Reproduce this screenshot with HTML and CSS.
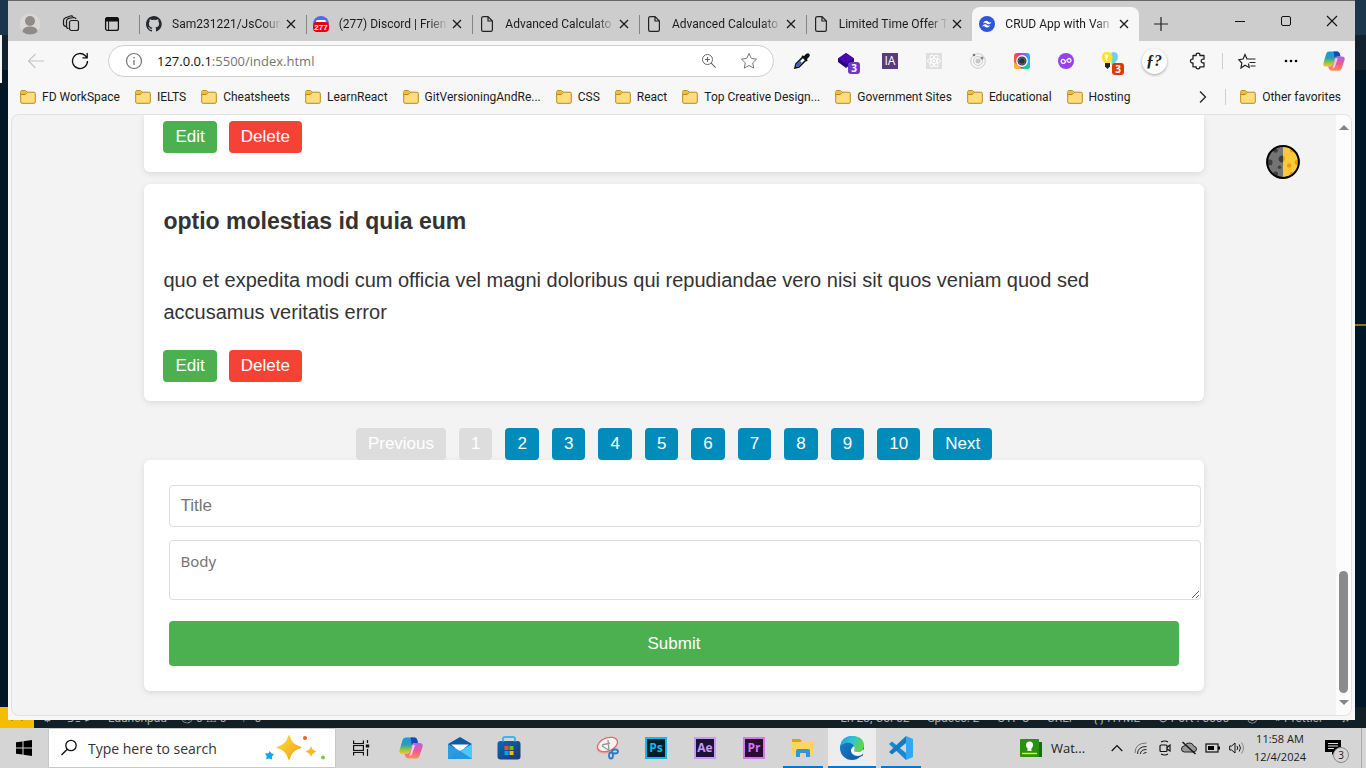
FILE: index.html
```html
<!DOCTYPE html>
<html lang="en">
<head>
<meta charset="utf-8">
<title>CRUD App with Vanilla JS</title>
<link rel="stylesheet" href="styles.css">
</head>
<body>
<svg class="sprite" aria-hidden="true">
  <defs>
    <linearGradient id="g-cop1" x1="0" y1="0" x2="0" y2="1"><stop offset="0" stop-color="#159bea"/><stop offset=".45" stop-color="#2d9fae"/><stop offset=".75" stop-color="#9cc63a"/><stop offset="1" stop-color="#f6c62b"/></linearGradient>
    <linearGradient id="g-cop2" x1="0" y1="0" x2="0" y2="1"><stop offset="0" stop-color="#b264e4"/><stop offset=".5" stop-color="#ee5796"/><stop offset="1" stop-color="#fb9258"/></linearGradient>
    <linearGradient id="g-edge" x1="0" y1="0" x2="1" y2=".4"><stop offset="0" stop-color="#1e9de0"/><stop offset=".5" stop-color="#2cc3d8"/><stop offset="1" stop-color="#5fd746"/></linearGradient>
    <linearGradient id="g-edge2" x1="0" y1="0" x2="1" y2="1"><stop offset="0" stop-color="#1783cf"/><stop offset="1" stop-color="#12539f"/></linearGradient>
    <linearGradient id="g-store" x1="0" y1="0" x2="1" y2="1"><stop offset="0" stop-color="#0b68bd"/><stop offset="1" stop-color="#1f3767"/></linearGradient>
    <linearGradient id="g-cam" x1="0" y1="0" x2="1" y2="0"><stop offset="0" stop-color="#ff5a3c"/><stop offset=".3" stop-color="#f02c92"/><stop offset=".6" stop-color="#8a5cf0"/><stop offset="1" stop-color="#16c0e8"/></linearGradient>
    <linearGradient id="g-star" x1="0" y1="0" x2="1" y2="1"><stop offset="0" stop-color="#ffdb3d"/><stop offset="1" stop-color="#f3a115"/></linearGradient>
  </defs>
  <symbol id="close" viewBox="0 0 12 12"><path d="M2 2l8 8M10 2l-8 8" fill="none" stroke="#1a1a1a" stroke-width="1.3"/></symbol>
  <symbol id="page" viewBox="0 0 16 16"><path d="M4.500 .6H9L13.400 5v8.800q0 1.600-1.600 1.600H4.200q-1.600 0-1.600-1.600V2.200Q2.600.6 4.500.6zM9 .8V5h4.300" fill="none" stroke="#222" stroke-width="1.200"/></symbol>
  <symbol id="folder" viewBox="0 0 16 14"><path d="M.7 2.700V1.800Q.7.6 1.900.6h3.600l1.600 1.600h6.800q1.400 0 1.400 1.400v8.300q0 1.400-1.400 1.400H2.100Q.7 13.300.7 11.900z" fill="#ffdc7c" stroke="#b78a13"/><path d="M1.200 1.200h4.200l1.300 1.300-1.500 1.700h-4z" fill="#f2b92e"/><path d="M.8 4.500h4.400l1.900-2" fill="none" stroke="#b78a13"/></symbol>
  <symbol id="copilot" viewBox="0 0 24 24"><path d="M6.500 1.500h9q2 0 2.800 2.400L19 7h-3.400q-2 0-2.700 2.200L11 15.500Q10.200 18 7.600 18H3.300Q-.4 18 .6 14L3.500 4q.8-2.500 3-2.500z" fill="url(#g-cop1)"/><path d="M11.500 1.500h4q2 0 2.800 2.400L19 7h-3.400q-2 0-2.700 2.200Z" fill="#1b48b6"/><path d="M17.500 22.500H9.300q-2.300 0-3-2.300L5.600 18h2q2.600 0 3.400-2.500l2-6.300Q13.700 7 16.200 7h4.500q3.700 0 2.800 4l-3 9q-.8 2.500-3 2.500z" fill="url(#g-cop2)"/><path d="M13.800 8.500l2.300.8-3 9q-.8 2-2.900 2z" fill="#fff" opacity=".65"/></symbol>
</svg>

<main class="desktop">
  <div class="backdrop" aria-hidden="true"><span class="sliver"></span><span class="marker"></span></div>
  <footer class="status">
    <span class="remote">&gt;&lt;</span>
    <div class="status-group left"><span>⚙</span><span>⎇ ⊳</span><span>Launchpad</span><span>ⓧ 0 ⚠ 0</span><span>⚐ 0</span></div>
    <div class="status-group right"><span>Ln 23, Col 52</span><span>Spaces: 2</span><span>UTF-8</span><span>CRLF</span><span>{ } HTML</span><span>⊘ Port : 5500</span><span>◎</span><span>» Prettier</span><span>♫</span></div>
  </footer>

  <section class="window">
    <header class="tabstrip">
      <div class="strip-tools">
        <button aria-label="Profile"><svg width="22" height="22" viewBox="0 0 22 22"><circle cx="11" cy="11" r="10.500" fill="#dad8d5"/><circle cx="11" cy="8" r="5" fill="#8f8b88"/><path d="M3.500 19q0-5.500 7.500-5.500t7.500 5.500Q11 24 3.500 19z" fill="#8f8b88"/></svg></button>
        <button aria-label="Workspaces"><svg width="18" height="18" viewBox="0 0 18 18" fill="none" stroke="#1c1c1c" stroke-width="1.200"><rect x="7.500" y="5.500" width="9" height="10" rx="2"/><path d="M6.500 13.500Q4.500 13.500 4.500 11.500V6q0-2 2-2.600L12 2.500q1.500 0 2 1.500M4 11.500Q1.500 11 1.500 9V5.500q0-2 2-2.800L9 .8q1.600 0 2 .9"/></svg></button>
        <button aria-label="Tab actions"><svg width="16" height="16" viewBox="0 0 16 16"><rect x="1.600" y="1.600" width="12.800" height="12.800" rx="2" fill="none" stroke="#111" stroke-width="1.300"/><path d="M1.500 3.500q0-2 2-2h9q2 0 2 2V5h-13z" stroke="#111" fill="#111"/><path d="M4.600 5v9" stroke="#111"/></svg></button>
      </div>
      <nav class="tabs">
        <div class="tab"><svg class="fav" viewBox="0 0 16 16"><path d="M8 0C3.600 0 0 3.600 0 8c0 3.500 2.300 6.500 5.500 7.600.4.100.5-.2.500-.4v-1.400c-2.200.5-2.700-1-2.700-1-.4-.9-.9-1.200-.9-1.200-.7-.5.100-.5.100-.5.800.1 1.200.8 1.200.8.7 1.200 1.900.9 2.300.7.100-.5.300-.9.500-1.100-1.800-.2-3.600-.9-3.600-4 0-.9.300-1.600.8-2.100-.1-.2-.4-1 .1-2.100 0 0 .7-.2 2.200.8a7.500 7.500 0 0 1 4 0c1.500-1 2.200-.8 2.200-.8.400 1.100.2 1.900.1 2.100.5.600.8 1.300.8 2.100 0 3.100-1.900 3.700-3.700 3.900.3.300.6.800.6 1.500v2.200c0 .2.100.5.500.4A8 8 0 0 0 8 0z" fill="#24292f"/></svg><span class="title">Sam231221/JsCours</span><button aria-label="Close tab"><svg width="12" height="12"><use href="#close"/></svg></button></div>
        <div class="tab"><svg class="fav" viewBox="0 0 16 16"><path d="M0 8a8 8 0 0 1 16 0z" fill="#5865f2"/><rect x="3" y="4" width="10" height="3" rx="1.500" fill="#fff"/><rect y="6" width="16" height="10" rx="4" fill="#e3000f"/><text x="8" y="14" class="fav-count">277</text></svg><span class="title">(277) Discord | Frien</span><button aria-label="Close tab"><svg width="12" height="12"><use href="#close"/></svg></button></div>
        <div class="tab"><svg class="fav"><use href="#page"/></svg><span class="title">Advanced Calculato</span><button aria-label="Close tab"><svg width="12" height="12"><use href="#close"/></svg></button></div>
        <div class="tab"><svg class="fav"><use href="#page"/></svg><span class="title">Advanced Calculato</span><button aria-label="Close tab"><svg width="12" height="12"><use href="#close"/></svg></button></div>
        <div class="tab"><svg class="fav"><use href="#page"/></svg><span class="title">Limited Time Offer T</span><button aria-label="Close tab"><svg width="12" height="12"><use href="#close"/></svg></button></div>
        <div class="tab active"><svg class="fav" viewBox="0 0 16 16"><circle cx="8" cy="8" r="8" fill="#2f55d8"/><path d="M4 7.500Q5 4.500 7.500 4.700 8.600 4.800 9.600 5.900 11 7 12.600 5.700 11.500 8.600 9 8.300 8 8.100 7 7.100 5.700 6 4 7.500zM3 10.700Q4 7.900 6.300 8.200 7.300 8.300 8.300 9.300 9.800 10.300 11.200 9 10.200 11.800 7.700 11.500 6.700 11.300 5.800 10.400 4.500 9.500 3 10.700z" fill="#fff"/></svg><span class="title">CRUD App with Van</span><button aria-label="Close tab"><svg width="12" height="12"><use href="#close"/></svg></button></div>
      </nav>
      <button class="newtab" aria-label="New tab"><svg width="14" height="14"><path d="M7 0v14M0 7h14" stroke="#222" stroke-width="1.200"/></svg></button>
      <div class="win-controls">
        <button aria-label="Minimize"><svg width="12" height="12"><path d="M1 6.500h10" stroke="#111"/></svg></button>
        <button aria-label="Restore"><svg width="12" height="12"><rect x="1.500" y="1.500" width="9" height="9" rx="1.500" fill="none" stroke="#111"/></svg></button>
        <button aria-label="Close"><svg width="12" height="12" viewBox="0 0 12 12"><path d="M1 1l10 10M11 1L1 11" stroke="#111" stroke-width="1.100"/></svg></button>
      </div>
    </header>

    <div class="toolbar">
      <button aria-label="Back"><svg width="18" height="16"><path d="M17 8H2M8.500 1L1.500 8l7 7" fill="none" stroke="#c6c6c6" stroke-width="1.200"/></svg></button>
      <button aria-label="Refresh"><svg width="18" height="18"><path d="M16.500 9A7.500 7.500 0 1 1 14.300 3.700L16 5.500M16.200 1v4.800h-4.800" fill="none" stroke="#111" stroke-width="1.300"/></svg></button>
      <div class="address">
        <svg width="18" height="18"><circle cx="9" cy="9" r="7.500" fill="none" stroke="#757575" stroke-width="1.200"/><path d="M9 8v5M9 5v1.600" stroke="#757575" stroke-width="1.300"/></svg>
        <a class="url" href="#"><b>127.0.0.1</b>:5500/index.html</a>
        <button aria-label="Zoom"><svg width="16" height="16"><circle cx="6.500" cy="6.500" r="5" fill="none" stroke="#666"/><path d="M10.200 10.200l4.500 4.500M6.500 4v5M4 6.500h5" stroke="#666" stroke-width="1.100"/></svg></button>
        <button aria-label="Add to favorites"><svg width="18" height="18" viewBox="0 0 18 18"><path d="M9 1.500l2.300 4.900 5.300.7-3.900 3.700 1 5.300L9 13.500l-4.700 2.600 1-5.300L1.400 7.100l5.300-.7z" fill="none" stroke="#777" stroke-linejoin="round"/></svg></button>
      </div>
      <button aria-label="Color picker"><svg width="16" height="16"><path d="M1 15l1-4 7-7 3 3-7 7z" fill="#fff" stroke="#111" stroke-width="1.600"/><path d="M2 14l1-3 3-3 2 2-4 4z" fill="#3261d8"/><path d="M7.500 3.500l5 5 1.300-1.300-1-1L15 4q1.500-1.500.3-3t-3.300 0L9.800 3.200l-1-1z" fill="#111"/></svg></button>
      <button class="badged" aria-label="Layers"><svg width="16" height="16"><path d="M8 0l8 5.500v3L8 15 0 9V5.500z" fill="#27077c"/><path d="M8 0l8 5.500L8 11 0 5.500z" fill="#4a08b2"/></svg><span class="badge purple">3</span></button>
      <button aria-label="Internet Archive"><span class="ia">IA</span></button>
      <button aria-label="React tools"><svg width="16" height="16"><rect width="16" height="16" fill="#dedede"/><g fill="none" stroke="#fff"><ellipse cx="8" cy="8" rx="6.500" ry="2.500"/><ellipse cx="8" cy="8" rx="6.500" ry="2.500" transform="rotate(60 8 8)"/><ellipse cx="8" cy="8" rx="6.500" ry="2.500" transform="rotate(120 8 8)"/></g><circle cx="8" cy="8" r="1.300" fill="#fff"/></svg></button>
      <button aria-label="Orbit"><svg width="16" height="16"><circle cx="8" cy="8" r="7.300" fill="none" stroke="#ccc"/><circle cx="8" cy="8" r="4.500" fill="none" stroke="#ccc"/><circle cx="8" cy="8" r="2.500" fill="#c6c6c6"/><circle cx="4" cy="2" r="1.300" fill="#777"/><circle cx="12" cy="5" r="1.500" fill="#888"/></svg></button>
      <button aria-label="Capture"><svg width="16" height="16"><rect width="16" height="16" rx="3" fill="url(#g-cam)"/><path d="M8 16l8-7v4q0 3-3 3z" fill="#23c98f"/><path d="M0 9l8 7H3q-3 0-3-3z" fill="#ffb52e"/><circle cx="8" cy="8" r="5.200" fill="#26323c" stroke="#fff" stroke-width="1.400"/><circle cx="8" cy="8" r="3.300" fill="none" stroke="#7a8994" stroke-width=".7"/></svg></button>
      <button aria-label="Link tool"><svg width="16" height="16"><circle cx="8" cy="8" r="8" fill="#983ff0"/><path d="M8 8.500L6.500 10Q5 11 3.700 9.700T3.700 7q1.300-1.300 2.600 0l1.400 1.600M8.300 7.500L10 6q1.400-1 2.500.2t0 2.600q-1.300 1.300-2.700-.2l-.8-.8" fill="none" stroke="#fff" stroke-width="1.300"/></svg></button>
      <button class="badged" aria-label="Ideas"><svg width="18" height="18"><path d="M12 0q5 0 5 5 0 2.500-2.500 5v3h-4V9q-2-1-2-4t3.500-5z" fill="#78cbed"/><path d="M6 0q5.500 0 5.500 5.500 0 2.500-2.500 6H4Q.8 8 .8 5.500.8 0 6 0z" fill="#ffe12e"/><path d="M3.500 3.500q1-2 4 0L5.500 9z" fill="#fffbd0"/><path d="M4 11h5v3.500l-2.500 2.500L4 14.500z" fill="#222"/></svg><span class="badge red">3</span></button>
      <button aria-label="Font finder"><span class="fq">ƒ?</span></button>
      <button aria-label="Extensions"><svg width="18" height="18"><path d="M4 3.500h3.200q-.5-2.300 1.800-2.300t1.800 2.300H15V7.200q-2.800-.3-2.800 1.800T15 11v3.800h-4.200q.4 2-1.800 2t-1.800-2H4V11Q1.500 11.200 1.500 9T4 7.200z" fill="none" stroke="#222" stroke-width="1.300" stroke-linejoin="round"/></svg></button>
      <span class="divider"></span>
      <button aria-label="Favorites"><svg width="18" height="16"><path d="M10.500 10.500l.7 4L7 12.300 3 15l.8-5L.8 6.700l4.300-.7L7 1.500 9 6h8.500M11.500 9.500h6M12.500 13h5" fill="none" stroke="#222" stroke-width="1.200"/></svg></button>
      <button aria-label="Settings and more"><svg width="16" height="4"><circle cx="3" cy="2" r="1.300"/><circle cx="8" cy="2" r="1.300"/><circle cx="13" cy="2" r="1.300"/></svg></button>
      <button aria-label="Copilot"><svg width="22" height="22"><use href="#copilot"/></svg></button>
    </div>

    <nav class="bookmarks">
      <a href="#"><svg><use href="#folder"/></svg>FD WorkSpace</a>
      <a href="#"><svg><use href="#folder"/></svg>IELTS</a>
      <a href="#"><svg><use href="#folder"/></svg>Cheatsheets</a>
      <a href="#"><svg><use href="#folder"/></svg>LearnReact</a>
      <a href="#"><svg><use href="#folder"/></svg>GitVersioningAndRe...</a>
      <a href="#"><svg><use href="#folder"/></svg>CSS</a>
      <a href="#"><svg><use href="#folder"/></svg>React</a>
      <a href="#"><svg><use href="#folder"/></svg>Top Creative Design...</a>
      <a href="#"><svg><use href="#folder"/></svg>Government Sites</a>
      <a href="#"><svg><use href="#folder"/></svg>Educational</a>
      <a href="#"><svg><use href="#folder"/></svg>Hosting</a>
      <button class="more" aria-label="More bookmarks"><svg width="8" height="12" viewBox="0 0 8 12"><path d="M1 .5L6.500 6 1 11.500" fill="none" stroke="#222" stroke-width="1.300"/></svg></button>
      <span class="divider"></span>
      <a href="#"><svg><use href="#folder"/></svg>Other favorites</a>
    </nav>

    <div class="viewport">
      <div class="page">
        <article class="card clipped">
          <div class="actions"><button class="btn edit">Edit</button><button class="btn delete">Delete</button></div>
        </article>
        <article class="card">
          <h3>optio molestias id quia eum</h3>
          <p>quo et expedita modi cum officia vel magni doloribus qui repudiandae vero nisi sit quos veniam quod sed accusamus veritatis error</p>
          <div class="actions"><button class="btn edit">Edit</button><button class="btn delete">Delete</button></div>
        </article>
        <nav class="pagination">
          <button class="btn" disabled>Previous</button><button class="btn" disabled>1</button><button class="btn">2</button><button class="btn">3</button><button class="btn">4</button><button class="btn">5</button><button class="btn">6</button><button class="btn">7</button><button class="btn">8</button><button class="btn">9</button><button class="btn">10</button><button class="btn">Next</button>
        </nav>
        <form class="post-form">
          <input type="text" placeholder="Title" aria-label="Title">
          <textarea placeholder="Body" aria-label="Body"></textarea>
          <button type="submit">Submit</button>
        </form>
        <button class="theme" aria-label="Toggle theme"><svg width="34" height="34"><circle cx="17" cy="17" r="16" fill="#ffc83d"/><path d="M17 1a16 16 0 0 0 0 32z" fill="#747474"/><g fill="#3d3d3d"><path d="M17 10.500V17.500A3.600 3.600 0 1 1 17 10.500z"/><circle cx="13.500" cy="22.300" r="1.700"/><circle cx="3.500" cy="17.500" r="3"/><circle cx="9.500" cy="29" r="2.500"/><circle cx="9.500" cy="5.500" r="2.300"/></g><g fill="#f19a0a"><path d="M17 10.800a3.300 3.300 0 0 1 0 6z"/><circle cx="23.200" cy="20.500" r="2.200"/><circle cx="31" cy="17.500" r="2.400"/><circle cx="26" cy="5.500" r="2"/><circle cx="25.500" cy="29" r="2"/></g><circle cx="17" cy="17" r="15.900" fill="none" stroke="#000" stroke-width="2"/></svg></button>
      </div>
      <div class="scrollbar" aria-hidden="true">
        <svg width="10" height="5"><path d="M0 5L5 0l5 5z" fill="#858585"/></svg>
        <span class="track"><span class="thumb"></span></span>
        <svg width="10" height="5"><path d="M0 0h10L5 5z" fill="#858585"/></svg>
      </div>
    </div>
  </section>
</main>

<footer class="taskbar">
  <button class="start" aria-label="Start"><svg width="16" height="16"><path d="M0 2.300L6.500 1.400V7.500H0zM7.500 1.200L16 0v7.500H7.500zM0 8.500h6.500v6.100L0 13.700zM7.500 8.500H16V16l-8.500-1.200z"/></svg></button>
  <label class="search">
    <svg width="16" height="18"><circle cx="10" cy="6.500" r="5.200" fill="none" stroke="#111" stroke-width="1.300"/><path d="M6.300 10.200L.5 16" stroke="#111" stroke-width="1.400"/></svg>
    <input type="text" placeholder="Type here to search" aria-label="Type here to search">
    <svg width="62" height="26"><path d="M24 1q2 9 11.500 11.500Q26 15 24 24q-2-9-11.500-11.500Q22 10 24 1z" fill="url(#g-star)" stroke="url(#g-star)" stroke-width="1.500" stroke-linejoin="round"/><path d="M46 11q1 4 5.500 5.500Q47 18 46 22q-1-4-5.500-5.500Q45 15 46 11z" fill="#f8b92b"/><path d="M4.500 16l2 2.500 2.500.5-2 2.500v3l-3-1-3 1 .8-3L0 18.500l3.500-.3z" fill="#14a5ed"/><circle cx="40" cy="3" r="2" fill="#f05c2c"/><circle cx="58" cy="22.500" r="2" fill="#85c83d"/></svg>
  </label>
  <button class="taskview" aria-label="Task view"><svg width="18" height="16" fill="none" stroke="#111" stroke-width="1.200"><path d="M1.600.5v3h9.800v-3M1.600 15.500v-3h9.800v3M15.500 0v3M15.500 9v7"/><rect x="1.600" y="5.500" width="9.800" height="5"/><path d="M13.800 4.500h3.400v3h-3.400z" fill="#111" stroke="none"/></svg></button>
  <div class="apps">
    <button aria-label="Copilot"><svg width="24" height="24"><use href="#copilot"/></svg></button>
    <button aria-label="Mail"><svg width="24" height="24"><path d="M0 8L12 1l12 7v4H0z" fill="#0b5ba7"/><path d="M3 8.500h18l-9 7z" fill="#fff"/><path d="M0 8v15h24V8L12 15z" fill="#2b9be5"/><path d="M24 8v15L12 15z" fill="#45cbfb"/><path d="M0 23h24L12 15z" fill="#2496e2"/></svg></button>
    <button aria-label="Store"><svg width="24" height="24"><path d="M6 7V3q0-2 2-2h8q2 0 2 2v4" fill="none" stroke="#38b9ed" stroke-width="2"/><rect x=".5" y="5" width="23" height="18.500" rx="3" fill="url(#g-store)"/><path d="M6 5.500V3M18 5.500V3" stroke="#38b9ed" stroke-width="2"/><path d="M7.500 10h4v4h-4z" fill="#f25022"/><path d="M12.500 10h4v4h-4z" fill="#7fba00"/><path d="M7.500 15h4v4h-4z" fill="#00a4ef"/><path d="M12.500 15h4v4h-4z" fill="#ffb900"/></svg></button>
    <span class="spacer"></span>
    <button aria-label="Snipping Tool"><svg width="24" height="24"><ellipse cx="12" cy="10" rx="11" ry="7" transform="rotate(-22 12 10)" fill="#e8aaaa"/><ellipse cx="12.500" cy="8.500" rx="10.500" ry="6.500" transform="rotate(-22 12.500 8.500)" fill="#f8f5f5" stroke="#e46b6b" stroke-width="1.300"/><path d="M13 4l1 11M7 10l8 5M15 7l-8 2" stroke="#999" stroke-width="1.400"/><g fill="none" stroke="#2f7bbf" stroke-width="1.800"><ellipse cx="16" cy="19.500" rx="2" ry="3"/><ellipse cx="20" cy="15.500" rx="3" ry="2"/></g></svg></button>
    <button aria-label="Photoshop"><span class="adobe ps">Ps</span></button>
    <button aria-label="After Effects"><span class="adobe ae">Ae</span></button>
    <button aria-label="Premiere"><span class="adobe pr">Pr</span></button>
    <button class="running" aria-label="File Explorer"><svg width="22" height="20"><path d="M0 1h8l2 2h12v15H0z" fill="#ffd461"/><path d="M0 1h8l2 2-2 1H0z" fill="#dda016"/><path d="M4 19v-6q0-2 2-2h10q2 0 2 2v6h-4v-4H8v4z" fill="#3593dd"/></svg></button>
    <button class="current" aria-label="Edge"><svg width="24" height="24"><circle cx="12" cy="12" r="12" fill="url(#g-edge2)"/><path d="M.1 11Q1.500 0 12 0q11.800.4 12 9.500 0 6-6.500 6.500-3.800 0-3.200-2 1.700-2-.3-4Q11.500 6 6.500 6.800 1.500 8 .1 11z" fill="url(#g-edge)"/><path d="M14 10q-4-1-5.200 3Q8.500 20 17 20q4 .2 6-2.300.5 1-.6 2.300-.8 0-3 1-11 1-10.600-7Q10 9 14 10z" fill="#0d68b4"/><path d="M14 10q1.800 2.200.3 4-.5 2 3.200 2 4 0 5.500-2.500l1 .5q0 3-2.500 5Q15 21.500 12 17.500T14 10z" fill="#f5f6f7"/></svg></button>
    <button class="running" aria-label="Visual Studio Code"><svg width="24" height="24"><path d="M17 0l7 3v18l-7 3z" fill="#31a8f1"/><path d="M17 24v-7L3 5.500 0 8z" fill="#1689d4"/><path d="M17 0v7L3 18.500 0 16z" fill="#137ac4"/></svg></button>
  </div>
  <div class="tray">
    <button class="widget"><svg width="22" height="18"><path d="M4 3h18v15H4z" fill="#107010"/><rect width="19" height="18" rx="1" fill="#26920f"/><circle cx="9.500" cy="6" r="3.500" fill="#fff"/><path d="M7.500 8h4v4h-4z" fill="#fff"/><path d="M2 14.500h15" stroke="#e7f000" stroke-width="1.500"/></svg>Wat...</button>
    <button aria-label="Show hidden icons"><svg width="12" height="8"><path d="M.7 7L6 1.500 11.300 7" fill="none" stroke="#111" stroke-width="1.200"/></svg></button>
    <button aria-label="Network"><svg width="14" height="14" fill="none" stroke="#222"><path d="M1 12Q1 2 12.500 2" stroke="#777"/><path d="M3.500 13q0-7.500 9-7.500M6.500 13q0-4.500 6-4.500M9.500 13q0-1.500 3-1.500"/></svg></button>
    <button aria-label="Meet now"><svg width="12" height="16" fill="none" stroke="#111" stroke-width="1.200"><rect x="1" y="5" width="7" height="6.500" rx="1"/><path d="M8 7.500L11 5v6L8 9M2 2q4-2 7 0M2 14q4 2 7 0"/></svg></button>
    <button aria-label="OneDrive"><svg width="16" height="14"><path d="M3.500 11q-3 0-3-3t3-3Q5 1.500 9 2q3 .4 3.500 3 3 .4 3 3t-3 3z" fill="#999" stroke="#222"/><path d="M1.500 1l13 12" stroke="#111" stroke-width="1.400"/></svg></button>
    <button aria-label="Battery"><svg width="16" height="10"><rect x="1" y="1" width="12" height="8" fill="none" stroke="#111" stroke-width="1.200"/><path d="M3 3h6v4H3zM13 3.500h2v3h-2z"/></svg></button>
    <button aria-label="Volume"><svg width="16" height="14" fill="none" stroke="#111"><path d="M.7 5v4h2L6 12V2L2.700 5zM8 5q1.500 2 0 4M10.200 3.500q2.500 3.500 0 7"/><path d="M12.500 1.500q4 5.500 0 11" stroke="#888"/></svg></button>
    <button class="clock"><span>11:58 AM</span><span>12/4/2024</span></button>
    <button class="notify" aria-label="Notifications"><svg width="16" height="16"><path d="M0 0h16v12h-6l-3 3v-3H0z"/><path d="M3 3.500h10M3 6h10M3 8.500h6" stroke="#ddd"/></svg><span>3</span></button>
  </div>
</footer>
</body>
</html>
```

FILE: styles.css
```css
* { box-sizing: border-box; }

body {
  margin: 0;
  height: 100vh;
  display: flex;
  flex-direction: column;
  overflow: hidden;
  font-family: "Open Sans", "Noto Sans", sans-serif;
  font-size: 12px;
  color: #1b1b1b;
}

button {
  margin: 0;
  padding: 0;
  border: 0;
  background: none;
  font: inherit;
  color: inherit;
}

svg { display: block; flex: none; }
a { color: inherit; text-decoration: none; }
.sprite { position: absolute; width: 0; height: 0; }

/* Desktop and editor behind the browser */
.desktop {
  position: relative;
  flex: 1;
  min-height: 0;
  display: flex;
  padding: 0 11px 8px 8px;
}

.backdrop {
  position: absolute;
  inset: 0;
  background: linear-gradient(#1a374b 35px, #13222f 35px, #13222f 70px, #011627 70px);
}

.sliver {
  position: absolute;
  top: 35px;
  left: 0;
  width: 2px;
  height: 48px;
  background: #f5f5f5;
}

.marker {
  position: absolute;
  top: 324px;
  right: 0;
  width: 12px;
  height: 2px;
  background: #8c7610;
}

.status {
  position: absolute;
  inset: auto 0 0;
  height: 21px;
  display: flex;
  justify-content: space-between;
  padding-right: 16px;
  background: #121f27;
  color: #a5adb3;
  font-family: Roboto, sans-serif;
  line-height: 23px;
  white-space: nowrap;
}

.remote {
  width: 34px;
  background: #f5bd00;
  color: #222;
  text-align: center;
}

.status-group { display: flex; }
.status-group.left { gap: 14px; margin: 0 auto 0 8px; }
.status-group.right { gap: 18px; }

/* Browser window */
.window {
  position: relative;
  flex: 1;
  min-width: 0;
  display: flex;
  flex-direction: column;
  border-top: 1px solid #69666a;
  background: #f7f7f7;
}

.tabstrip {
  flex: none;
  height: 40px;
  display: flex;
  background: #cdcdcd;
}

.strip-tools { display: flex; padding-left: 1px; }
.strip-tools button {
  width: 41px;
  height: 46px;
  display: grid;
  place-items: center;
}

.tabs {
  flex: 0 1 1000px;
  min-width: 0;
  display: flex;
  margin-left: 7px;
  padding-top: 6px;
}

.tab {
  flex: 1 1 0;
  min-width: 0;
  display: flex;
  align-items: center;
  padding: 0 9px 0 7px;
  background: linear-gradient(#858585, #858585) 0 8px / 1px 19px no-repeat;
}

.tab.active {
  border-radius: 8px 8px 0 0;
  background: #f7f7f7;
}

.fav { width: 16px; height: 16px; }
.fav-count { font: bold 8px "Liberation Sans", sans-serif; fill: #fff; text-anchor: middle; }

.title {
  flex: 1;
  min-width: 0;
  margin: 0 3px 0 10px;
  overflow: hidden;
  font-family: Roboto, sans-serif;
  white-space: nowrap;
  -webkit-mask-image: linear-gradient(to left, transparent, #000 20px);
  mask-image: linear-gradient(to left, transparent, #000 20px);
}

.newtab {
  width: 43px;
  height: 46px;
  display: grid;
  place-items: center;
}

.win-controls { display: flex; margin-left: auto; }
.win-controls button {
  width: 46px;
  height: 40px;
  display: grid;
  place-items: center;
}

.toolbar {
  flex: none;
  height: 40px;
  display: flex;
  align-items: center;
  padding-left: 6px;
}

.toolbar > button {
  flex: 0 0 44px;
  display: grid;
  place-items: center;
}
.toolbar > button:last-child { flex-basis: 42px; }

.address {
  flex: 1;
  min-width: 0;
  height: 32px;
  margin: 0 6px;
  padding: 0 15px 0 16px;
  display: flex;
  align-items: center;
  border: 1px solid #cfcfcf;
  border-radius: 16px;
  background: #fff;
}
.address button { margin-left: 23px; }

.url {
  flex: 1;
  margin-left: 14px;
  font-size: 13px;
  color: #757575;
}
.url b { font-weight: normal; color: #111; }

.badged { position: relative; }
.badge {
  position: absolute;
  right: 8px;
  bottom: -5px;
  width: 12px;
  height: 12px;
  border-radius: 3px;
  color: #fff;
  font-size: 10px;
  font-weight: bold;
  line-height: 12px;
  text-align: center;
}
.purple { background: #6c38c4; }
.red { background: #da3b01; }

.ia {
  width: 16px;
  height: 16px;
  background: #573d80;
  color: #fff;
  line-height: 16px;
}

.fq {
  width: 25px;
  height: 25px;
  border-radius: 50%;
  background: #fff;
  box-shadow: 0 1px 3px #0005;
  font: italic bold 16px/24px "Liberation Serif", serif;
}

.divider { flex: none; width: 1px; height: 16px; margin: 0 2px; background: #cfcfcf; }

.bookmarks {
  flex: none;
  height: 33px;
  display: flex;
  align-items: center;
  gap: 15px;
  padding: 0 14px 2px 12px;
  white-space: nowrap;
  font-family: Roboto, sans-serif;
}
.bookmarks a { display: flex; align-items: center; gap: 6px; }
.bookmarks a svg { width: 16px; height: 14px; }
.bookmarks .divider { margin: 0 -1px 0 3px; }
.more { margin-left: auto; }

/* Web page */
.viewport {
  flex: 1;
  min-height: 0;
  margin: 0 3px 4px;
  display: flex;
  overflow: hidden;
  border: 1px solid #e2e2e2;
  border-radius: 8px;
  background: #f3f3f3;
}

.page {
  position: relative;
  flex: 1;
  min-width: 0;
  font-family: "Liberation Sans", Arial, sans-serif;
  color: #333;
}

.card, .post-form {
  width: 80%;
  margin: 0 auto;
  border-radius: 6px;
  background: #fff;
  box-shadow: 0 2px 6px #0000001a;
}

.card { margin-bottom: 12px; padding: 21px 19px 19px; }
.card.clipped { padding-top: 6px; border-radius: 0 0 6px 6px; }

.card h3 { margin: 0 0 27px; font-size: 23px; line-height: 32px; }
.card p { margin: 0 0 22px; font-size: 20px; line-height: 32px; }

.actions { display: flex; gap: 12px; }

.btn {
  height: 32px;
  padding: 0 12px;
  border-radius: 4px;
  background: #008cba;
  color: #fff;
  font-size: 17px;
}
.edit { background: #4caf50; }
.delete { background: #f44336; }
.btn:disabled { background: #ddd; }

.pagination {
  display: flex;
  justify-content: center;
  gap: 13px;
  margin-top: 27px;
}

.post-form {
  display: flex;
  flex-direction: column;
  align-items: flex-start;
  padding: 25px;
}

.post-form input, .post-form textarea {
  box-sizing: content-box;
  width: 100%;
  margin: 0;
  padding: 10px;
  border: 1px solid #ddd;
  border-radius: 4px;
  font: 17px/20px "Liberation Sans", Arial, sans-serif;
}
.post-form input { margin-bottom: 13px; }
.post-form textarea {
  height: 38px;
  margin-bottom: 21px;
  font: 15px/20px "Noto Sans", sans-serif;
}
.post-form ::placeholder { color: #757575; }

.post-form button {
  width: 100%;
  height: 45px;
  border-radius: 4px;
  background: #4caf50;
  color: #fff;
  font-size: 17px;
}

.theme { position: absolute; top: 30px; right: 36px; }

.scrollbar {
  flex: none;
  width: 15px;
  display: flex;
  flex-direction: column;
  align-items: center;
  padding: 10px 0;
  background: #fcfcfc;
}
.track {
  flex: 1;
  width: 9px;
  margin: 8px 0 7px;
  display: flex;
  flex-direction: column;
  justify-content: flex-end;
}
.thumb { height: 22%; border-radius: 5px; background: #8b8b8b; }

/* Taskbar */
.taskbar {
  flex: none;
  height: 40px;
  display: flex;
  background: #d5d5d5;
}
.taskbar button { display: grid; place-items: center; }

.start { width: 48px; }

.search {
  flex: 0 0 287px;
  display: flex;
  align-items: center;
  padding: 0 8px 0 12px;
  border: 1px solid #c8c8c8;
  background: #fff;
}
.search input {
  flex: 1;
  min-width: 0;
  margin: 0;
  padding: 0 0 0 11px;
  border: 0;
  background: none;
  font: 14px "Open Sans", sans-serif;
}
.search input::placeholder { color: #333; }

.taskview { width: 49px; }

.apps { display: flex; gap: 1px; margin-left: 2px; }
.apps > * { width: 48px; }

.running {
  background: linear-gradient(#0078d7, #0078d7) 50% 100% / 40px 2px no-repeat;
}
.current { background: #ededed; box-shadow: inset 0 -2px #0078d7; }

.adobe {
  width: 22px;
  height: 22px;
  border: 2px solid;
  font-size: 12px;
  font-weight: bold;
  line-height: 17px;
}
.ps { color: #16b7ec; background: #001e29; }
.ae { color: #c49cf2; background: #1d1135; }
.pr { color: #d277ee; background: #2b0d33; }

.tray { display: flex; margin-left: auto; padding-right: 4px; }
.tray > button { width: 24px; }
.tray > .widget {
  width: 85px;
  display: flex;
  align-items: center;
  gap: 9px;
  font-size: 13px;
}
.tray > .clock {
  width: 62px;
  align-content: center;
  font-size: 11px;
  line-height: 18px;
}
.tray > .notify {
  position: relative;
  width: 51px;
  padding-right: 6px;
  border-right: 1px solid #aaa;
}
.notify span {
  position: absolute;
  right: 12px;
  bottom: 5px;
  width: 16px;
  height: 16px;
  border: 1px solid #888;
  border-radius: 50%;
  background: #d5d5d5;
  font-size: 10px;
  line-height: 14px;
}
```
